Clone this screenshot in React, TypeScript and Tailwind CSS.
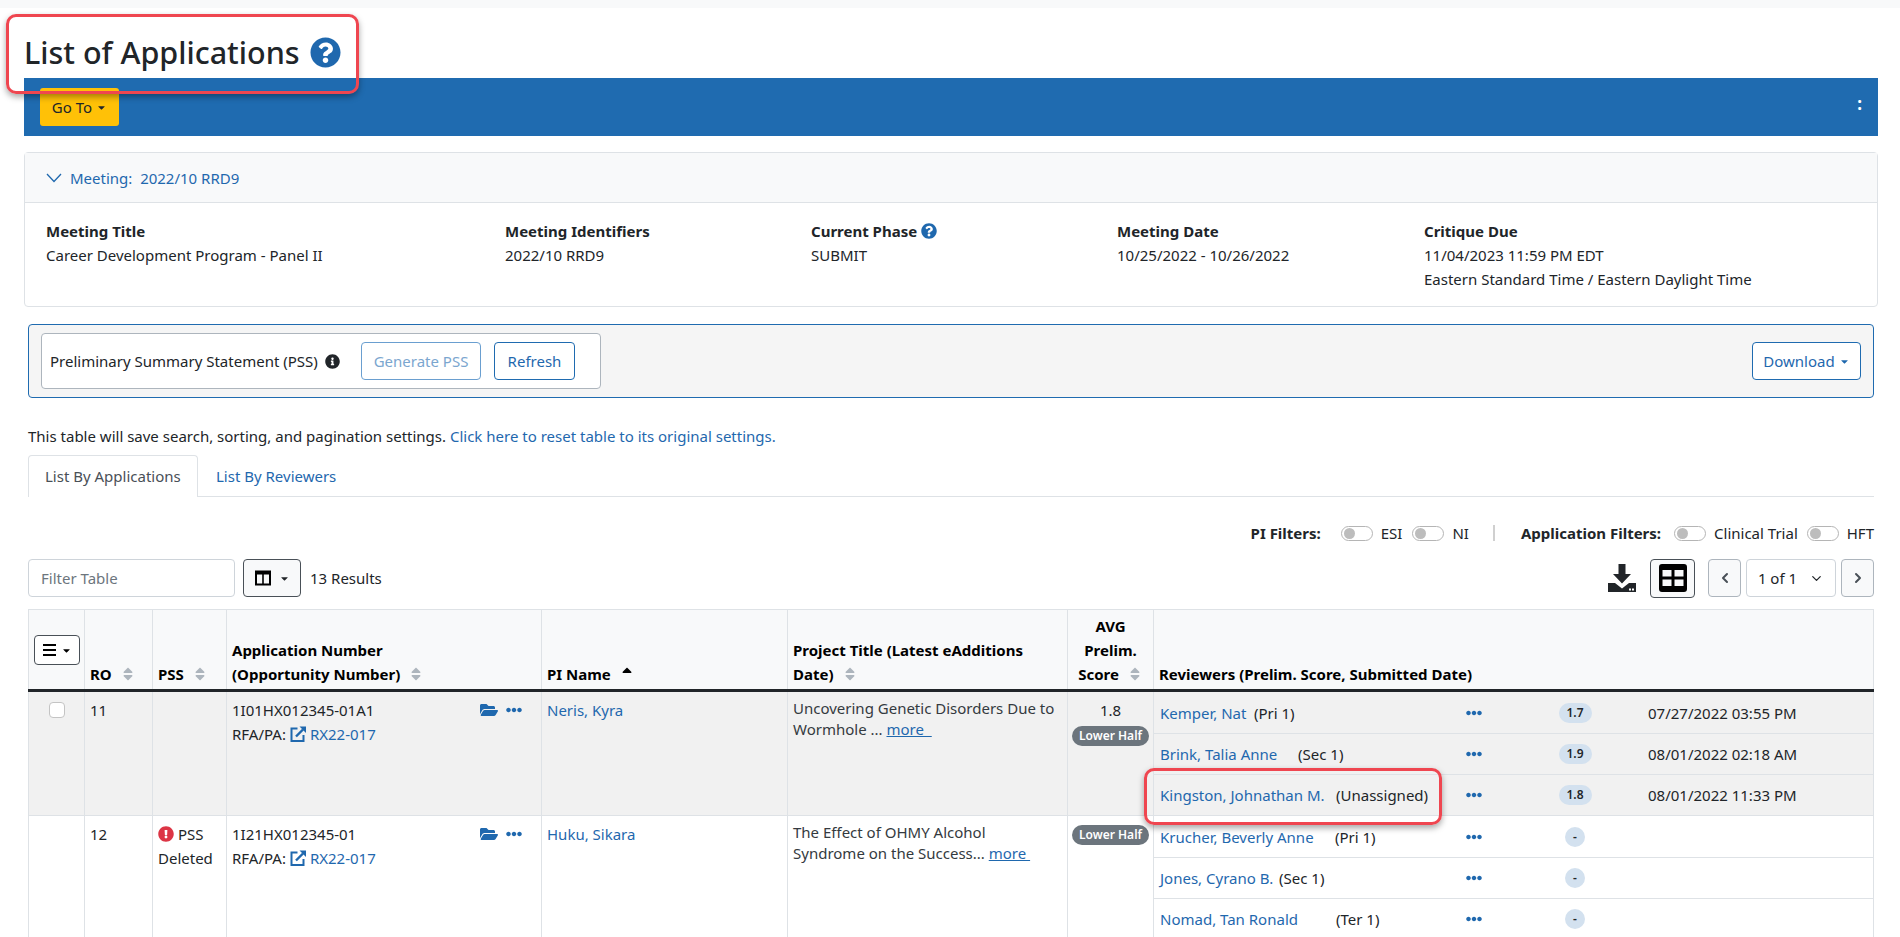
import { ChevronDown, ChevronLeft, ChevronRight } from "lucide-react"
import {
  FaCaretDown,
  FaEllipsisH,
  FaExclamationCircle,
  FaFolderOpen,
  FaInfoCircle,
  FaQuestionCircle,
  FaSort,
  FaSortUp,
} from "react-icons/fa"

const link = "text-[#1f68ae]"

function SortIcon() {
  return <FaSort className="ml-2 inline-block align-[-2px] text-[16px] text-[#adb5bd]" />
}

function Caret({ className = "" }: { className?: string }) {
  return <FaCaretDown className={`ml-1 inline-block text-[11px] ${className}`} />
}

function Toggle({ label }: { label: string }) {
  return (
    <span className="flex items-center gap-2">
      <span className="flex h-[15px] w-8 items-center rounded-full border border-[#b5b5b5] bg-white pl-[2px]">
        <span className="h-[11px] w-[11px] rounded-full bg-[#bdbdbd]" />
      </span>
      <span>{label}</span>
    </span>
  )
}

function ExternalIcon() {
  return (
    <svg viewBox="0 0 16 16" className="mx-1 inline-block h-4 w-4 align-[-2px] text-[#1f68ae]" fill="none" stroke="currentColor">
      <path d="M7.500 2.500H1.500v12.500h12V9" strokeWidth="2" />
      <path d="M6 10.500 13 3.500" strokeWidth="2.400" />
      <path d="M9.500 0.500H16V7z" fill="currentColor" stroke="none" />
    </svg>
  )
}

function Ellipsis() {
  return <FaEllipsisH className={`${link} text-[16px]`} />
}

const reviewers1 = [
  { name: "Kemper, Nat", nameClass: "w-[94px]", role: "(Pri 1)", score: "1.7", date: "07/27/2022 03:55 PM" },
  { name: "Brink, Talia Anne", nameClass: "w-[138px]", role: "(Sec 1)", score: "1.9", date: "08/01/2022 02:18 AM" },
  { name: "Kingston, Johnathan M.", nameClass: "w-[176px]", role: "(Unassigned)", score: "1.8", date: "08/01/2022 11:33 PM" },
]

const reviewers2 = [
  { name: "Krucher, Beverly Anne", nameClass: "w-[175px]", role: "(Pri 1)", score: "-", date: "" },
  { name: "Jones, Cyrano B.", nameClass: "w-[119px]", role: "(Sec 1)", score: "-", date: "" },
  { name: "Nomad, Tan Ronald", nameClass: "w-[176px]", role: "(Ter 1)", score: "-", date: "" },
]

type Reviewer = (typeof reviewers1)[number]

function ReviewerRows({ rows }: { rows: Reviewer[] }) {
  return (
    <div>
      {rows.map((r, i) => (
        <div key={r.name} className={`flex h-[41px] items-center pl-[6px] ${i > 0 ? "border-t border-[#dee2e6]" : ""}`}>
          <span className="flex w-[306px] shrink-0">
            <span className={`${link} ${r.nameClass} shrink-0 whitespace-nowrap`}>{r.name}</span>
            <span className="whitespace-nowrap">{r.role}</span>
          </span>
          <span className="w-[68px] shrink-0">
            <Ellipsis />
          </span>
          <span className="flex w-[82px] shrink-0 justify-center">
            <span
              className={`flex h-5 items-center justify-center rounded-full bg-[#d3e1ef] text-[12px] font-semibold text-[#212529] ${
                r.score === "-" ? "w-5" : "w-[33px]"
              }`}
            >
              {r.score}
            </span>
          </span>
          <span className="ml-8 whitespace-nowrap">{r.date}</span>
        </div>
      ))}
    </div>
  )
}

export default function App() {
  return (
    <div className="relative h-[937px] w-[1900px] overflow-hidden bg-white text-[15px] leading-6 text-[#212529] [font-family:'Noto_Sans',sans-serif]">
      <div className="h-[8px] bg-[#f8f9fa]" />

      <div className="pl-6 pr-[22px]">
        <h1 className="flex h-[70px] items-center gap-[10px] pt-[18px] text-[30.5px] font-medium text-[#212529]">
          List of Applications
          <FaQuestionCircle className="text-[31px] text-[#1f68ae]" />
        </h1>

        <div className="flex h-[58px] items-start justify-between bg-[#1f6bb0] pl-4 pr-2 pt-[10px]">
          <button className="flex h-[38px] w-[79px] items-center justify-center rounded-[3px] bg-[#ffc107] text-[#212529]">
            Go To
            <Caret />
          </button>
          <span className="mt-[4px] px-2 text-[17px] font-bold text-white">:</span>
        </div>

        <div className="mt-4 h-[155px] rounded border border-[#dee2e6]">
          <div className={`flex h-[50px] items-center gap-2 border-b border-[#dee2e6] bg-[#f8f9fa] pl-[21px] ${link}`}>
            <svg viewBox="0 0 16 10" className="h-[10px] w-4" fill="none" stroke="currentColor" strokeWidth="1.300">
              <path d="M1 1l7 7.500L15 1" />
            </svg>
            <span>Meeting:&nbsp; 2022/10 RRD9</span>
          </div>
          <div className="grid grid-cols-[459px_306px_306px_307px_1fr] pl-[21px] pt-4">
            <div>
              <div className="font-bold">Meeting Title</div>
              <div>Career Development Program - Panel II</div>
            </div>
            <div>
              <div className="font-bold">Meeting Identifiers</div>
              <div>2022/10 RRD9</div>
            </div>
            <div>
              <div className="flex items-center gap-1 font-bold">
                Current Phase
                <FaQuestionCircle className="text-[16px] text-[#1f68ae]" />
              </div>
              <div>SUBMIT</div>
            </div>
            <div>
              <div className="font-bold">Meeting Date</div>
              <div>10/25/2022 - 10/26/2022</div>
            </div>
            <div>
              <div className="font-bold">Critique Due</div>
              <div>11/04/2023 11:59 PM EDT</div>
              <div>Eastern Standard Time / Eastern Daylight Time</div>
            </div>
          </div>
        </div>

        <div className="ml-1 mr-1 mt-[17px] flex h-[74px] items-center justify-between rounded border border-[#1f6bb0] bg-[#f5f5f5] pl-3 pr-3">
          <div className="flex h-[56px] w-[560px] items-center rounded border border-[#adb5bd] bg-white pl-2">
            <span className="w-[275px] shrink-0 whitespace-nowrap">Preliminary Summary Statement (PSS)</span>
            <FaInfoCircle className="shrink-0 text-[15px] text-[#212529]" />
            <button className="ml-[21px] flex h-[38px] w-[120px] shrink-0 items-center justify-center rounded border border-[#6a9fd0] bg-white text-[#7ba6cf]">
              Generate PSS
            </button>
            <button className={`ml-[13px] flex h-[38px] w-[81px] shrink-0 items-center justify-center rounded border border-[#1f6bb0] bg-white ${link}`}>
              Refresh
            </button>
          </div>
          <button className={`flex h-[38px] w-[109px] items-center justify-center rounded border border-[#1f6bb0] bg-white ${link}`}>
            Download
            <Caret />
          </button>
        </div>

        <div className="ml-1 mr-1">
          <p className="mt-[26px]">
            This table will save search, sorting, and pagination settings.{" "}
            <span className={link}>Click here to reset table to its original settings.</span>
          </p>

          <div className="mt-[7px] flex h-[42px] border-b border-[#dee2e6]">
            <div className="h-[42px] w-[170px] rounded-t border border-b-0 border-[#dee2e6] bg-white pl-4 pt-[8px] text-[#495057]">
              List By Applications
            </div>
            <div className={`pl-[18px] pt-[9px] ${link}`}>List By Reviewers</div>
          </div>

          <div className="mt-[25px] flex h-[22px] items-center justify-end">
            <span className="mr-5 font-bold">PI Filters:</span>
            <Toggle label="ESI" />
            <span className="ml-[10px]" />
            <Toggle label="NI" />
            <span className="ml-6 h-4 w-[2px] bg-[#d0d0d0]" />
            <span className="ml-[26px] mr-[13px] font-bold">Application Filters:</span>
            <Toggle label="Clinical Trial" />
            <span className="ml-[9px]" />
            <Toggle label="HFT" />
          </div>

          <div className="mt-[15px] flex h-[38px] items-center justify-between">
            <div className="flex items-center">
              <div className="flex h-[38px] w-[207px] items-center rounded border border-[#ced4da] pl-3 text-[#6c757d]">Filter Table</div>
              <button className="ml-2 flex h-[38px] w-[58px] items-center justify-center rounded border border-[#495057] bg-[#f8f9fa]">
                <svg viewBox="0 0 16 16" className="h-4 w-4" fill="none" stroke="#000">
                  <path d="M1 1.500h14v13H1z" strokeWidth="2" />
                  <path d="M8 2v12" strokeWidth="1.600" />
                  <path d="M1 2h14v2H1z" fill="#000" />
                </svg>
                <Caret className="ml-2" />
              </button>
              <span className="ml-[9px]">13 Results</span>
            </div>
            <div className="flex items-center">
              <svg viewBox="0 0 28 28" className="h-7 w-7 text-[#212529]" fill="currentColor">
                <path d="M10.500 0h7v10h5.500L14 19.500 5 10h5.500z" />
                <path d="M0 19h7l7 5.500 7-5.500h7v9H0z" />
                <path d="M21 24.500h2v2h-2zM24 24.500h2v2h-2z" fill="#fff" />
              </svg>
              <button className="ml-[14px] flex h-[39px] w-[45px] items-center justify-center rounded border border-[#495057] bg-[#f8f9fa]">
                <svg viewBox="0 0 28 28" className="h-7 w-7" fill="#000">
                  <path
                    fillRule="evenodd"
                    d="M3 0h22a3 3 0 0 1 3 3v22a3 3 0 0 1-3 3H3a3 3 0 0 1-3-3V3a3 3 0 0 1 3-3zM3.500 6v6.500h9V6zM15.500 6v6.500h9V6zM3.500 15.500V22h9v-6.500zM15.500 15.500V22h9v-6.500z"
                  />
                </svg>
              </button>
              <button className="ml-[13px] flex h-[38px] w-[33px] items-center justify-center rounded border border-[#adb5bd] bg-[#f8f9fa]">
                <ChevronLeft size={16} strokeWidth={3} className="text-[#495057]" />
              </button>
              <div className="ml-[5px] flex h-[38px] w-[90px] items-center justify-center gap-3 rounded border border-[#ced4da]">
                1 of 1
                <ChevronDown size={15} strokeWidth={2} />
              </div>
              <button className="ml-[5px] flex h-[38px] w-[33px] items-center justify-center rounded border border-[#adb5bd] bg-[#f8f9fa]">
                <ChevronRight size={16} strokeWidth={3} className="text-[#495057]" />
              </button>
            </div>
          </div>

          <table className="mt-3 w-full table-fixed border-collapse">
            <colgroup>
              <col className="w-[56px]" />
              <col className="w-[68px]" />
              <col className="w-[74px]" />
              <col className="w-[315px]" />
              <col className="w-[246px]" />
              <col className="w-[280px]" />
              <col className="w-[86px]" />
              <col />
            </colgroup>
            <thead>
              <tr className="h-[81px] border-b-[3px] border-[#212529] bg-[#f8f9fa] align-bottom text-[#000]">
                <th className="border border-b-0 border-[#dee2e6] p-0 pb-6 pl-[5px] text-left font-normal">
                  <button className="flex h-[30px] w-[46px] items-center justify-center rounded border border-[#495057] bg-white">
                    <svg viewBox="0 0 14 12" className="h-3 w-[14px]" fill="#000">
                      <path d="M0 0h13v2H0zM0 5h13v2H0zM0 10h13v2H0z" />
                    </svg>
                    <Caret />
                  </button>
                </th>
                <th className="border border-b-0 border-[#dee2e6] px-[5px] pb-[3px] text-left font-bold">
                  RO
                  <SortIcon />
                </th>
                <th className="border border-b-0 border-[#dee2e6] px-[5px] pb-[3px] text-left font-bold">
                  PSS
                  <SortIcon />
                </th>
                <th className="border border-b-0 border-[#dee2e6] px-[5px] pb-[3px] text-left font-bold">
                  Application Number
                  <br />
                  (Opportunity Number)
                  <SortIcon />
                </th>
                <th className="border border-b-0 border-[#dee2e6] px-[5px] pb-[3px] text-left font-bold">
                  PI Name
                  <FaSortUp className="ml-2 inline-block align-[-2px] text-[16px] text-black" />
                </th>
                <th className="border border-b-0 border-[#dee2e6] px-[5px] pb-[3px] text-left font-bold">
                  Project Title (Latest eAdditions
                  <br />
                  Date)
                  <SortIcon />
                </th>
                <th className="border border-b-0 border-[#dee2e6] px-[4px] pb-[3px] text-center font-bold">
                  AVG
                  <br />
                  Prelim.
                  <br />
                  <span className="whitespace-nowrap">
                    Score
                    <SortIcon />
                  </span>
                </th>
                <th className="border border-b-0 border-[#dee2e6] px-[5px] pb-[3px] text-left font-bold whitespace-nowrap">
                  Reviewers (Prelim. Score, Submitted Date)
                </th>
              </tr>
            </thead>
            <tbody>
              <tr className="h-[123px] bg-[#f1f1f1] align-top">
                <td className="border border-[#dee2e6] pt-[6px] text-center">
                  <span className="mt-1 inline-block h-4 w-4 rounded-[4px] border border-[#c4c4c4] bg-white" />
                </td>
                <td className="border border-[#dee2e6] px-[5px] pt-[6px]">11</td>
                <td className="border border-[#dee2e6] px-[5px] pt-[6px]" />
                <td className="border border-[#dee2e6] px-[5px] pt-[6px]">
                  <div className="flex justify-between pr-[14px]">
                    <span>1I01HX012345-01A1</span>
                    <span className="flex items-center gap-2">
                      <FaFolderOpen className={`${link} text-[18px]`} />
                      <Ellipsis />
                    </span>
                  </div>
                  <div>
                    RFA/PA:
                    <ExternalIcon />
                    <span className={link}>RX22-017</span>
                  </div>
                </td>
                <td className={`border border-[#dee2e6] px-[5px] pt-[6px] ${link}`}>Neris, Kyra</td>
                <td className="border border-[#dee2e6] px-[5px] pt-[6px] leading-[21px] text-[#343a40]">
                  Uncovering Genetic Disorders Due to
                  <br />
                  Wormhole ... <span className={`${link} underline`}>more&nbsp;&nbsp;</span>
                </td>
                <td className="border border-[#dee2e6] px-[4px] pt-[6px] text-center">
                  <div>1.8</div>
                  <span className="inline-block h-5 w-[77px] rounded-full bg-[#6c757d] text-[12px] font-semibold leading-5 text-white">
                    Lower Half
                  </span>
                </td>
                <td className="border border-[#dee2e6] p-0 align-top">
                  <ReviewerRows rows={reviewers1} />
                </td>
              </tr>
              <tr className="h-[123px] align-top">
                <td className="border border-[#dee2e6]" />
                <td className="border border-[#dee2e6] px-[5px] pt-[6px]">12</td>
                <td className="border border-[#dee2e6] px-[5px] pt-[6px]">
                  <FaExclamationCircle className="mr-1 inline-block align-[-2px] text-[16px] text-[#dc3545]" />
                  PSS Deleted
                </td>
                <td className="border border-[#dee2e6] px-[5px] pt-[6px]">
                  <div className="flex justify-between pr-[14px]">
                    <span>1I21HX012345-01</span>
                    <span className="flex items-center gap-2">
                      <FaFolderOpen className={`${link} text-[18px]`} />
                      <Ellipsis />
                    </span>
                  </div>
                  <div>
                    RFA/PA:
                    <ExternalIcon />
                    <span className={link}>RX22-017</span>
                  </div>
                </td>
                <td className={`border border-[#dee2e6] px-[5px] pt-[6px] ${link}`}>Huku, Sikara</td>
                <td className="border border-[#dee2e6] px-[5px] pt-[6px] leading-[21px] text-[#343a40]">
                  The Effect of OHMY Alcohol
                  <br />
                  Syndrome on the Success... <span className={`${link} underline`}>more&nbsp;</span>
                </td>
                <td className="border border-[#dee2e6] px-[4px] pt-[5px] text-center">
                  <span className="inline-block h-5 w-[77px] rounded-full bg-[#6c757d] text-[12px] font-semibold leading-5 text-white">
                    Lower Half
                  </span>
                </td>
                <td className="border border-[#dee2e6] p-0 align-top">
                  <ReviewerRows rows={reviewers2} />
                </td>
              </tr>
            </tbody>
          </table>
        </div>
      </div>

      <div className="absolute left-[6px] top-[14px] h-[80px] w-[353px] rounded-[10px] border-[3px] border-[#ef4650] shadow-[0_3px_6px_rgba(0,0,0,0.35)]" />
      <div className="absolute left-[1144px] top-[768px] h-[57px] w-[298px] rounded-[10px] border-[3px] border-[#ef4650] shadow-[0_3px_6px_rgba(0,0,0,0.35)]" />
    </div>
  )
}
